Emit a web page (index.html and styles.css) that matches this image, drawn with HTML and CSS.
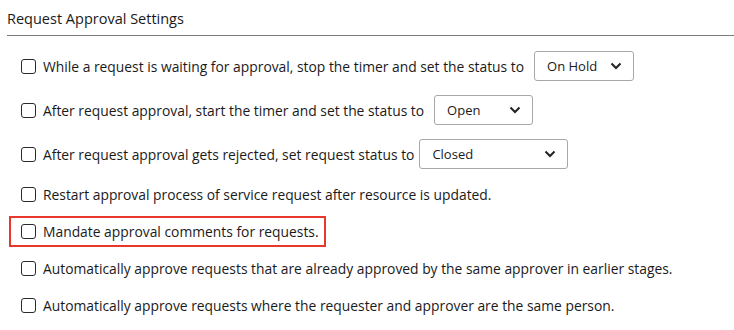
FILE: index.html
```html
<!DOCTYPE html>
<html lang="en">
<head>
  <meta charset="UTF-8">
  <title>Request Approval Settings</title>
  <link rel="stylesheet" href="styles.css">
</head>
<body>
  <div class="settings">
    <h3 class="settings-title">Request Approval Settings</h3>
    <div class="options">
      <label class="opt has-select">
        <span class="box"></span>
        <span class="opt-text">While a request is waiting for approval, stop the timer and set the status to</span>
        <span class="select w100"><span>On Hold</span>
          <svg width="12" height="8" viewBox="0 0 12 8"><path d="M1.5 1.5 L6 6 L10.5 1.5" fill="none" stroke="#222" stroke-width="2"/></svg>
        </span>
      </label>
      <label class="opt has-select">
        <span class="box"></span>
        <span class="opt-text">After request approval, start the timer and set the status to</span>
        <span class="select w99"><span>Open</span>
          <svg width="12" height="8" viewBox="0 0 12 8"><path d="M1.5 1.5 L6 6 L10.5 1.5" fill="none" stroke="#222" stroke-width="2"/></svg>
        </span>
      </label>
      <label class="opt has-select">
        <span class="box"></span>
        <span class="opt-text">After request approval gets rejected, set request status to</span>
        <span class="select w149"><span>Closed</span>
          <svg width="12" height="8" viewBox="0 0 12 8"><path d="M1.5 1.5 L6 6 L10.5 1.5" fill="none" stroke="#222" stroke-width="2"/></svg>
        </span>
      </label>
      <label class="opt">
        <span class="box"></span>
        <span class="opt-text">Restart approval process of service request after resource is updated.</span>
      </label>
      <label class="opt marked">
        <span class="box"></span>
        <span class="opt-text">Mandate approval comments for requests.</span>
      </label>
      <label class="opt">
        <span class="box"></span>
        <span class="opt-text">Automatically approve requests that are already approved by the same approver in earlier stages.</span>
      </label>
      <label class="opt">
        <span class="box"></span>
        <span class="opt-text">Automatically approve requests where the requester and approver are the same person.</span>
      </label>
    </div>
  </div>
</body>
</html>
```

FILE: styles.css
```css
body {
  margin: 0;
  padding: 0 0 0 7px;
  background: #ffffff;
  font-family: "Open Sans", Arial, sans-serif;
  color: #1a1a1a;
}
.settings-title {
  margin: 0;
  padding: 9px 0 6px;
  font-size: 14.5px;
  font-weight: 400;
  line-height: 20px;
  color: #1a1a1a;
  border-bottom: 1px solid #7a7a7a;
}
.options {
  display: flex;
  flex-direction: column;
  align-items: flex-start;
  gap: 6px;
  padding: 11px 0 0 2px;
}
.opt {
  display: flex;
  align-items: center;
  height: 27px;
  padding: 0 5px 0 10px;
  border: 2px solid transparent;
  font-size: 13.85px;
  cursor: pointer;
}
.opt.has-select {
  height: 26px;
  margin: 4px 0;
}
.opt.marked {
  border-color: #e8372c;
}
.box {
  width: 13px;
  height: 13px;
  border: 1.5px solid #2a2a2a;
  border-radius: 3px;
  margin-right: 7px;
  flex-shrink: 0;
}
.opt-text {
  white-space: nowrap;
}
.select {
  display: flex;
  align-items: center;
  justify-content: space-between;
  box-sizing: border-box;
  height: 30px;
  margin-left: 10px;
  padding: 0 11px 0 12px;
  border: 1px solid #a8a8a8;
  border-radius: 3px;
  font-size: 13px;
  background: #fff;
}
.w100 { width: 100px; }
.w99 { width: 99px; }
.w149 { width: 149px; margin-left: 5px; }
```
